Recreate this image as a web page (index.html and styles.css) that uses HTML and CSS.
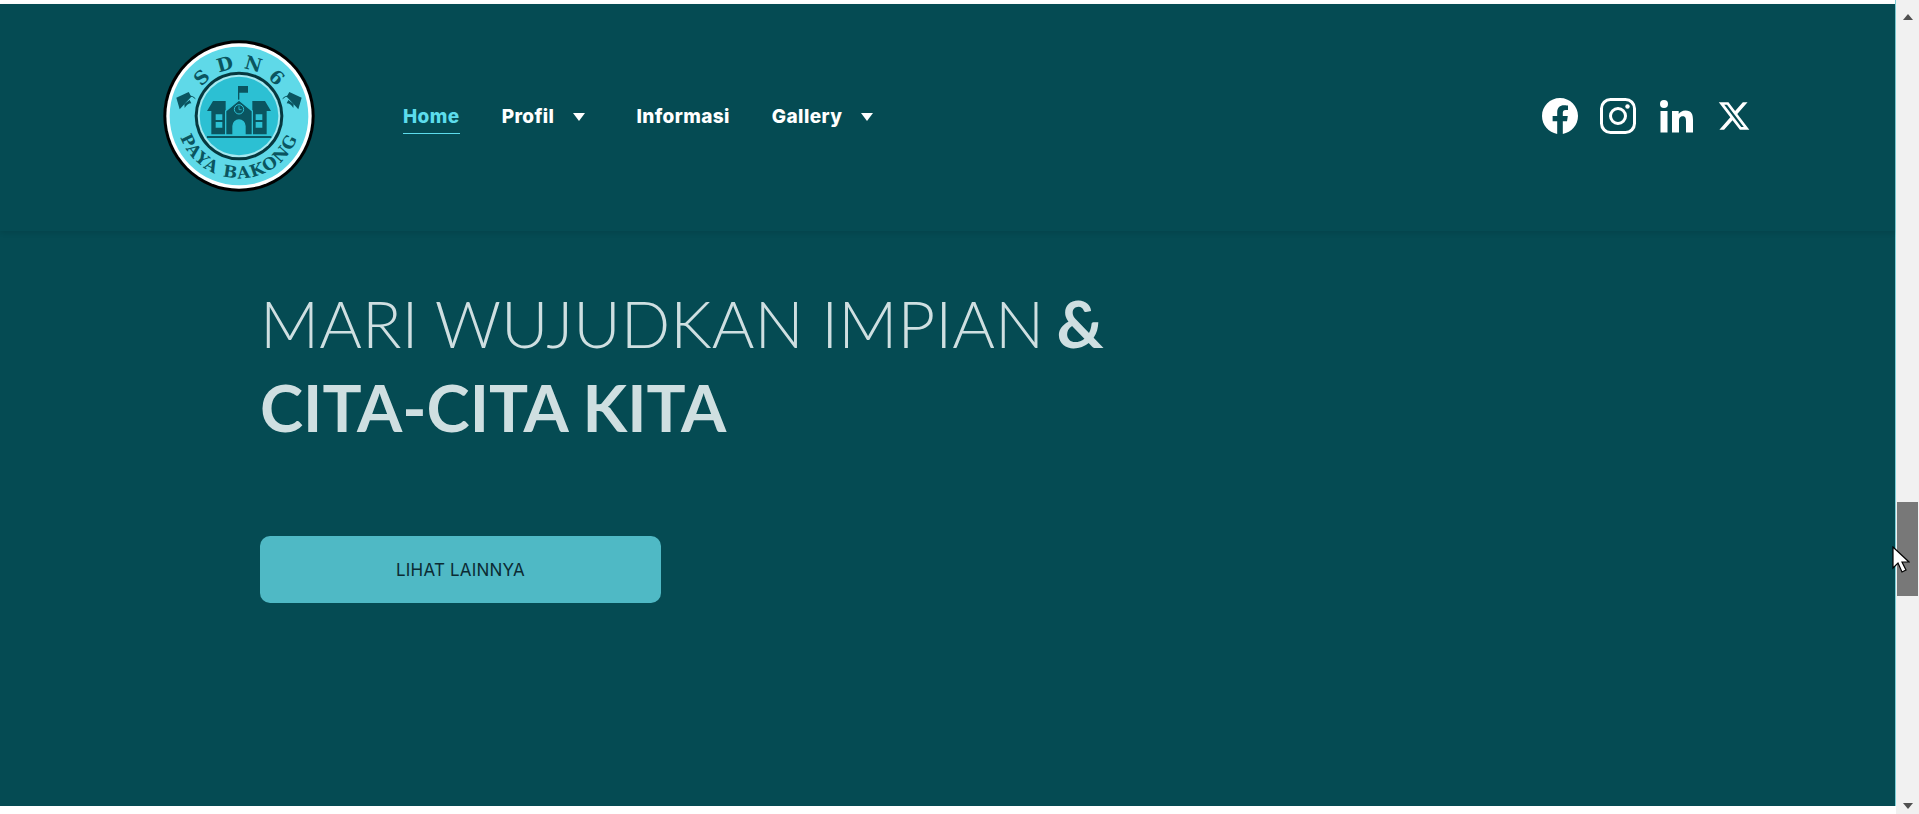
FILE: index.html
```html
<!DOCTYPE html>
<html lang="id">

<head>
    <meta charset="UTF-8">
    <meta name="viewport" content="width=device-width, initial-scale=1.0">
    <title>SDN 6 Paya Bakong</title>
    <link rel="stylesheet" href="styles.css">
</head>

<body>
    <div class="page">
        <div class="site">
            <header class="header">
                <a class="logo" href="#">
                    <svg viewBox="40 62 456 456" width="152" height="152">
                        <defs>
                            <path id="arcTop" d="M126 290a142 142 0 0 1 284 0"/>
                            <path id="arcBottom" d="M81 290a187 187 0 0 0 374 0"/>
                            <g id="cap">
                                <path d="M80 235l37-17 8 14-35 38z"/>
                                <path d="M105 266q8-14 20-14l-5-10-16 12z"/>
                                <path d="M120 230q10 0 17 8" fill="none" stroke="#0a5560" stroke-width="3"/>
                            </g>
                        </defs>
                        <circle cx="268" cy="290" r="227" fill="#000"/>
                        <circle cx="268" cy="290" r="218" fill="#fff"/>
                        <circle cx="268" cy="290" r="208" fill="#5fd9e8"/>
                        <circle cx="268" cy="290" r="133" fill="#06383f"/>
                        <circle cx="268" cy="290" r="124" fill="#a5e9f1"/>
                        <circle cx="268" cy="290" r="118" fill="#2cc0d3"/>
                        <text class="logo-top"><textPath href="#arcTop" startOffset="50%" text-anchor="middle">S D N 6</textPath></text>
                        <text class="logo-bottom"><textPath href="#arcBottom" startOffset="50%" text-anchor="middle">PAYA BAKONG</textPath></text>
                        <g fill="#0a5560">
                            <use href="#cap"/>
                            <use href="#cap" transform="matrix(-1 0 0 1 536 0)"/>
                            <path d="M265 245v-45h30v20h-26v25z"/>
                            <path fill-rule="evenodd" d="M190 245h38v100h-43v-70h-13zM198 285v17h20v-17zM198 308v17h20v-17z"/>
                            <path fill-rule="evenodd" d="M346 245h-38v100h43v-70h13zM338 285v17h-20v-17zM338 308v17h-20v-17z"/>
                            <path fill-rule="evenodd" stroke="#2cc0d3" stroke-width="4" d="M268 242l40 33v72h-80v-72zM250 347h36v-27a18 18 0 0 0-36 0z"/>
                            <circle cx="268" cy="270" r="14" stroke="#2cc0d3" stroke-width="3"/>
                            <rect x="172" y="350" width="193" height="6"/>
                        </g>
                        <path d="M268 261v10h8" fill="none" stroke="#2cc0d3" stroke-width="2.500"/>
                    </svg>
                </a>
                <nav class="nav">
                    <a class="nav-link active" href="#">Home</a>
                    <a class="nav-link has-caret" href="#">Profil</a>
                    <a class="nav-link" href="#">Informasi</a>
                    <a class="nav-link has-caret" href="#">Gallery</a>
                </nav>
                <div class="social">
                    <a href="#"><svg viewBox="0 0 24 24" width="36" height="36"><path fill="#fff" d="M24 12.073c0-6.627-5.373-12-12-12s-12 5.373-12 12c0 5.990 4.388 10.954 10.125 11.854v-8.385H7.078v-3.470h3.047V9.430c0-3.007 1.792-4.669 4.533-4.669 1.312 0 2.686.235 2.686.235v2.953H15.830c-1.491 0-1.956.925-1.956 1.874v2.250h3.328l-.532 3.470h-2.796v8.385C19.612 23.027 24 18.062 24 12.073z"/></svg></a>
                    <a href="#"><svg viewBox="0 0 36 36" width="36" height="36"><rect x="1.500" y="1.500" width="33" height="33" rx="9" fill="none" stroke="#fff" stroke-width="3"/><circle cx="18" cy="18" r="7.500" fill="none" stroke="#fff" stroke-width="3"/><circle cx="27.500" cy="8.500" r="2.200" fill="#fff"/></svg></a>
                    <a href="#"><svg viewBox="0 0 33 33" width="33" height="33"><circle cx="4" cy="4" r="4" fill="#fff"/><rect x=".5" y="11" width="7" height="21.500" fill="#fff"/><path fill="#fff" d="M12 11h6.700v3c1-1.800 3.400-3.600 6.800-3.600 6.200 0 7.500 4 7.500 9.500v12.600h-7V21.500c0-2.700-.1-5.300-3.200-5.300-3.200 0-3.800 2.500-3.800 5.100v11.200h-7z"/></svg></a>
                    <a href="#"><svg viewBox="0 0 24 24" width="34" height="34"><path fill="#fff" d="M18.244 2.250h3.308l-7.227 8.260 8.502 11.240H16.170l-5.214-6.817L4.990 21.750H1.680l7.730-8.835L1.254 2.250H8.080l4.713 6.231zm-1.161 17.520h1.833L7.084 4.126H5.117z"/></svg></a>
                </div>
            </header>
            <section class="hero">
                <h1 class="hero-title">MARI WUJUDKAN IMPIAN<span class="gap"> </span><b>&amp;</b><br><b>CITA-CITA KITA</b></h1>
                <a class="hero-btn" href="#">LIHAT LAINNYA</a>
            </section>
        </div>
        <div class="scrollbar">
            <span class="arrow-up"></span>
            <span class="arrow-down"></span>
            <span class="thumb"></span>
        </div>
    </div>
    <svg class="cursor" viewBox="0 0 18 28" width="18" height="28"><path d="M1 1v21l5-5 4 9 4-2-4-8h7z" fill="#fff" stroke="#000" stroke-width="1.200"/></svg>
</body>

</html>
```

FILE: styles.css
```css
* {
    padding: 0;
    margin: 0;
    box-sizing: border-box;
}

html,
body {
    height: 100%;
    overflow: hidden;
    background-color: #fff;
}

a {
    text-decoration: none;
}

.page {
    display: flex;
    height: 814px;
}

.site {
    flex: 1;
    display: flex;
    flex-direction: column;
    padding-top: 4px;
    height: 806px;
    background-color: #054b53;
    background-clip: content-box;
    border-right: 1px solid #7fd0d8;
}

.header {
    display: flex;
    align-items: center;
    height: 227px;
    padding: 0 144px 3px 163px;
    box-shadow: 0 2px 5px rgba(0, 0, 0, .1);
}

.logo {
    display: block;
    width: 152px;
    height: 152px;
}

.logo-top {
    font: bold 56px "DejaVu Serif", serif;
    word-spacing: 7px;
    fill: #0a5560;
}

.logo-bottom {
    font: bold 50px "DejaVu Serif", serif;
    fill: #0a5560;
    letter-spacing: 4px;
}

.nav {
    display: flex;
    align-items: center;
    gap: 42px;
    margin: 6px 0 0 88px;
}

.nav-link {
    position: relative;
    display: block;
    font: 800 19px/24px "Inter", sans-serif;
    letter-spacing: .4px;
    color: #fff;
    padding-bottom: 4px;
}

.nav-link.active {
    color: #5cdcec;
    border-bottom: 1px solid #5cdcec;
}

.has-caret {
    padding-right: 31px;
    margin-right: 9px;
}

.has-caret::after {
    content: "";
    position: absolute;
    right: 0;
    top: 8px;
    border-left: 6px solid transparent;
    border-right: 6px solid transparent;
    border-top: 8px solid #fff;
}

.social {
    display: flex;
    align-items: center;
    gap: 24px;
    margin-left: auto;
}

.social a {
    display: flex;
}

.social a:first-child {
    margin-right: -2px;
}

.hero {
    flex: 1;
    padding: 50px 0 0 260px;
}

.hero-title {
    font: 300 65.2px/84px "Lato", sans-serif;
    color: #cfdfe1;
}

.hero-title b {
    font-weight: 700;
}

.hero-title .gap {
    font-size: 46px;
    line-height: 0;
}

.hero-btn {
    display: flex;
    align-items: center;
    justify-content: center;
    width: 401px;
    height: 67px;
    margin-top: 87px;
    border-radius: 10px;
    background-color: #4fb9c5;
    font: 400 17px "Inter", sans-serif;
    letter-spacing: .2px;
    color: #0c2b33;
}

.scrollbar {
    position: relative;
    width: 23px;
    height: 814px;
    background-color: #f1f1f1;
}

.arrow-up,
.arrow-down {
    position: absolute;
    left: 7px;
    border-left: 5px solid transparent;
    border-right: 5px solid transparent;
}

.arrow-up {
    top: 14px;
    border-bottom: 6px solid #505050;
}

.arrow-down {
    bottom: 5px;
    border-top: 6px solid #505050;
}

.thumb {
    position: absolute;
    left: 1px;
    right: 1px;
    top: 502px;
    height: 94px;
    background-color: #787878;
}

.cursor {
    position: absolute;
    left: 1892px;
    top: 546px;
}
```
